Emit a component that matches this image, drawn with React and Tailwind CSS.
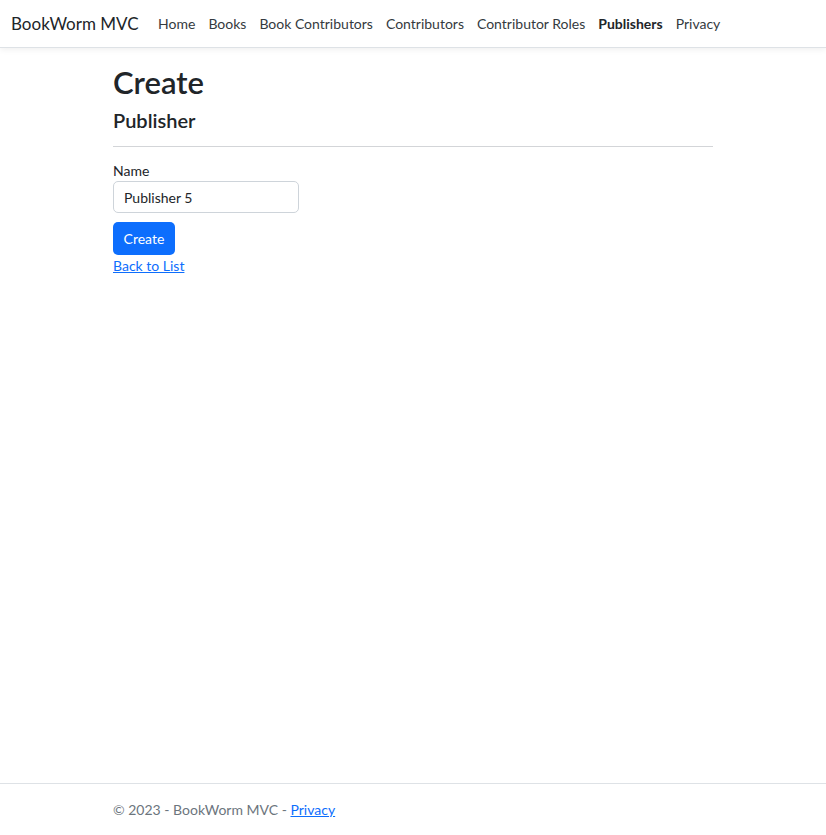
import React from 'react';

const navLinks = ['Home', 'Books', 'Book Contributors', 'Contributors', 'Contributor Roles', 'Publishers', 'Privacy'];

export default function App() {
  return (
    <div className="min-h-screen flex flex-col bg-white text-[#212529]" style={{ fontFamily: 'Lato, "Open Sans", sans-serif' }}>
      <header className="h-[48px] border-b border-[#dee2e6] shadow-[0_2px_6px_rgba(0,0,0,0.06)] flex items-center pl-[11px]">
        <a className="text-[17px] text-[#212529] mr-[13px]">BookWorm MVC</a>
        <nav className="flex items-center">
          {navLinks.map(l => (
            <a key={l} className={`px-[6.5px] text-[14px] ${l === 'Publishers' ? 'font-bold text-[#212529]' : 'text-[#343a40]'}`}>{l}</a>
          ))}
        </nav>
      </header>
      <main className="flex-1 w-[600px] mx-auto pt-[16px]">
        <h1 className="text-[31px] font-semibold leading-[1.2] mb-[7px]">Create</h1>
        <h4 className="text-[20px] font-semibold leading-[1.2]">Publisher</h4>
        <hr className="mt-[14px] mb-[14px] border-t border-[#d3d5d8]" />
        <form className="flex flex-col">
          <label className="text-[14px] leading-[20px]">Name</label>
          <input className="w-[186px] h-[32px] px-[10px] text-[14px] border border-[#ced4da] rounded-[5px] outline-none" defaultValue="Publisher 5" />
          <button type="button" className="mt-[9px] w-[62px] h-[33px] bg-[#0d6efd] text-white text-[14px] rounded-[5px]">Create</button>
        </form>
        <a className="block w-fit text-[14px] leading-[21px] text-[#0d6efd] underline">Back to List</a>
      </main>
      <footer className="h-[52px] border-t border-[#dee2e6] text-[#6c757d] text-[14px] flex items-center">
        <div className="w-[600px] mx-auto">
          © 2023 - BookWorm MVC - <a className="text-[#0d6efd] underline">Privacy</a>
        </div>
      </footer>
    </div>
  );
}
